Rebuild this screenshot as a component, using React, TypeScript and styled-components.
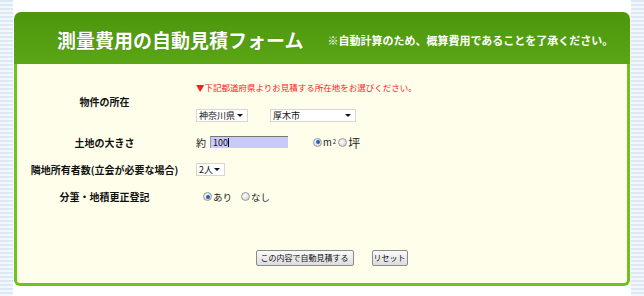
import React from "react";
import styled, { createGlobalStyle } from "styled-components";

const Global = createGlobalStyle`
  html, body { margin: 0; padding: 0; background: #ffffff; }
  body { font-family: "Noto Sans CJK JP", "Noto Sans", sans-serif; }
  * { box-sizing: border-box; }
`;

const Page = styled.div`
  display: flex;
  width: 644px;
  height: 296px;
  overflow: hidden;
`;

const Strip = styled.div`
  width: 13px;
  flex: none;
  background: repeating-linear-gradient(
    to bottom,
    #dde8f5 0px,
    #dde8f5 2px,
    #f4f8fd 2px,
    #f4f8fd 4px
  );
`;

const Main = styled.div`
  flex: 1;
  padding: 12px 1px 0 1px;
`;

const Panel = styled.div`
  display: flex;
  flex-direction: column;
`;

const Header = styled.div`
  height: 52px;
  border-radius: 7px 7px 0 0;
  background: linear-gradient(to bottom, #4c960d, #5aa615);
  display: flex;
  align-items: center;
  padding: 2px 0 0 43px;
  color: #ffffff;
`;

const Title = styled.h1`
  margin: 0;
  font-size: 19px;
  font-weight: 700;
  text-shadow: 0 0 1px rgba(0, 0, 0, 0.25);
`;

const Sub = styled.span`
  margin-left: 24px;
  font-size: 11px;
  font-weight: 700;
  padding-top: 2px;
`;

const Body = styled.div`
  height: 222px;
  background: #fefeea;
  border: 3px solid #6dc21f;
  border-top: none;
  border-radius: 0 0 6px 6px;
  padding-top: 14px;
  display: flex;
  flex-direction: column;
`;

const Grid = styled.div`
  display: grid;
  grid-template-columns: 179px 1fr;
  grid-template-rows: 50px 28px 27px 27px;
  align-items: center;
`;

const Label = styled.div<{ $lift?: number }>`
  text-align: center;
  font-size: 10px;
  font-weight: 700;
  color: #111;
  padding-right: 4px;
  margin-bottom: ${(p) => p.$lift ?? 0}px;
`;

const Field = styled.div<{ $indent?: number }>`
  display: flex;
  align-items: center;
  font-size: 10px;
  color: #222;
  padding-left: ${(p) => p.$indent ?? 0}px;
`;

const FieldStack = styled.div`
  align-self: start;
  display: flex;
  flex-direction: column;
  gap: 16px;
  padding-top: 3px;
`;

const Note = styled.div`
  color: #ff1a1a;
  font-size: 8.5px;
  line-height: 12px;
  white-space: nowrap;
`;

const SelectRow = styled.div`
  display: flex;
  gap: 22px;
`;

const Select = styled.div<{ $w: number }>`
  width: ${(p) => p.$w}px;
  height: 13px;
  background: #ffffff;
  border: 1px solid #d6d6d6;
  display: flex;
  align-items: center;
  justify-content: space-between;
  padding: 0 4px 0 2px;
  font-size: 9px;
  line-height: 11px;
  white-space: nowrap;
  color: #111;
`;

const Arrow = styled.span`
  width: 0;
  height: 0;
  border-left: 3px solid transparent;
  border-right: 3px solid transparent;
  border-top: 3px solid #111;
`;

const Approx = styled.span`
  margin-right: 4px;
`;

const TextInput = styled.div`
  width: 78px;
  height: 12px;
  background: #c9c9fb;
  border-top: 1px solid #777;
  border-left: 1px solid #999;
  font-size: 9px;
  line-height: 11px;
  padding-left: 2px;
  display: flex;
  align-items: center;
  color: #111;
`;

const Caret = styled.span`
  width: 1px;
  height: 9px;
  background: #000;
`;

const RadioGroup = styled.div<{ $ml: number; $gap: number }>`
  display: flex;
  align-items: center;
  gap: ${(p) => p.$gap}px;
  margin-left: ${(p) => p.$ml}px;
`;

const RadioItem = styled.label`
  display: flex;
  align-items: center;
  gap: 1px;
  font-size: 9.5px;
  color: #222;
`;

const Radio = styled.span<{ $on?: boolean }>`
  width: 9px;
  height: 9px;
  border-radius: 50%;
  border: 1px solid #9a9a9a;
  background: radial-gradient(circle at 40% 40%, #ffffff, #c8c8c8);
  display: flex;
  align-items: center;
  justify-content: center;
  &::after {
    content: "";
    width: 4px;
    height: 4px;
    border-radius: 50%;
    background: ${(p) => (p.$on ? "#1e64b4" : "transparent")};
  }
`;

const Sq = styled.sup`
  font-size: 6px;
  line-height: 0;
`;

const Tsubo = styled.span`
  font-size: 12px;
`;

const Buttons = styled.div`
  margin-top: 40px;
  display: flex;
  justify-content: center;
  gap: 18px;
  padding-left: 19px;
`;

const Button = styled.button<{ $pad: number }>`
  height: 16px;
  padding: 0 ${(p) => p.$pad}px;
  font-family: inherit;
  font-size: 8px;
  line-height: 12px;
  color: #111;
  background: linear-gradient(to bottom, #fafafa, #dcdcdc);
  border: 1px solid #8a8a8a;
  border-radius: 2px;
  white-space: nowrap;
`;

export default function App() {
  return (
    <>
      <Global />
      <Page>
        <Strip />
        <Main>
          <Panel>
            <Header>
              <Title>測量費用の自動見積フォーム</Title>
              <Sub>※自動計算のため、概算費用であることを了承ください。</Sub>
            </Header>
            <Body>
              <Grid>
                <Label $lift={3}>物件の所在</Label>
                <FieldStack>
                  <Note>▼下記都道府県よりお見積する所在地をお選びください。</Note>
                  <SelectRow>
                    <Select $w={52}>
                      神奈川県 <Arrow />
                    </Select>
                    <Select $w={86}>
                      厚木市 <Arrow />
                    </Select>
                  </SelectRow>
                </FieldStack>

                <Label>土地の大きさ</Label>
                <Field>
                  <Approx>約</Approx>
                  <TextInput>
                    100
                    <Caret />
                  </TextInput>
                  <RadioGroup $ml={25} $gap={2}>
                    <RadioItem>
                      <Radio $on />
                      m<Sq>2</Sq>
                    </RadioItem>
                    <RadioItem>
                      <Radio />
                      <Tsubo>坪</Tsubo>
                    </RadioItem>
                  </RadioGroup>
                </Field>

                <Label>隣地所有者数(立会が必要な場合)</Label>
                <Field>
                  <Select $w={29}>
                    2人 <Arrow />
                  </Select>
                </Field>

                <Label>分筆・地積更正登記</Label>
                <Field $indent={7}>
                  <RadioGroup $ml={0} $gap={9}>
                    <RadioItem>
                      <Radio $on />
                      あり
                    </RadioItem>
                    <RadioItem>
                      <Radio />
                      なし
                    </RadioItem>
                  </RadioGroup>
                </Field>
              </Grid>
              <Buttons>
                <Button $pad={4}>この内容で自動見積する</Button>
                <Button $pad={1}>リセット</Button>
              </Buttons>
            </Body>
          </Panel>
        </Main>
        <Strip />
      </Page>
    </>
  );
}
